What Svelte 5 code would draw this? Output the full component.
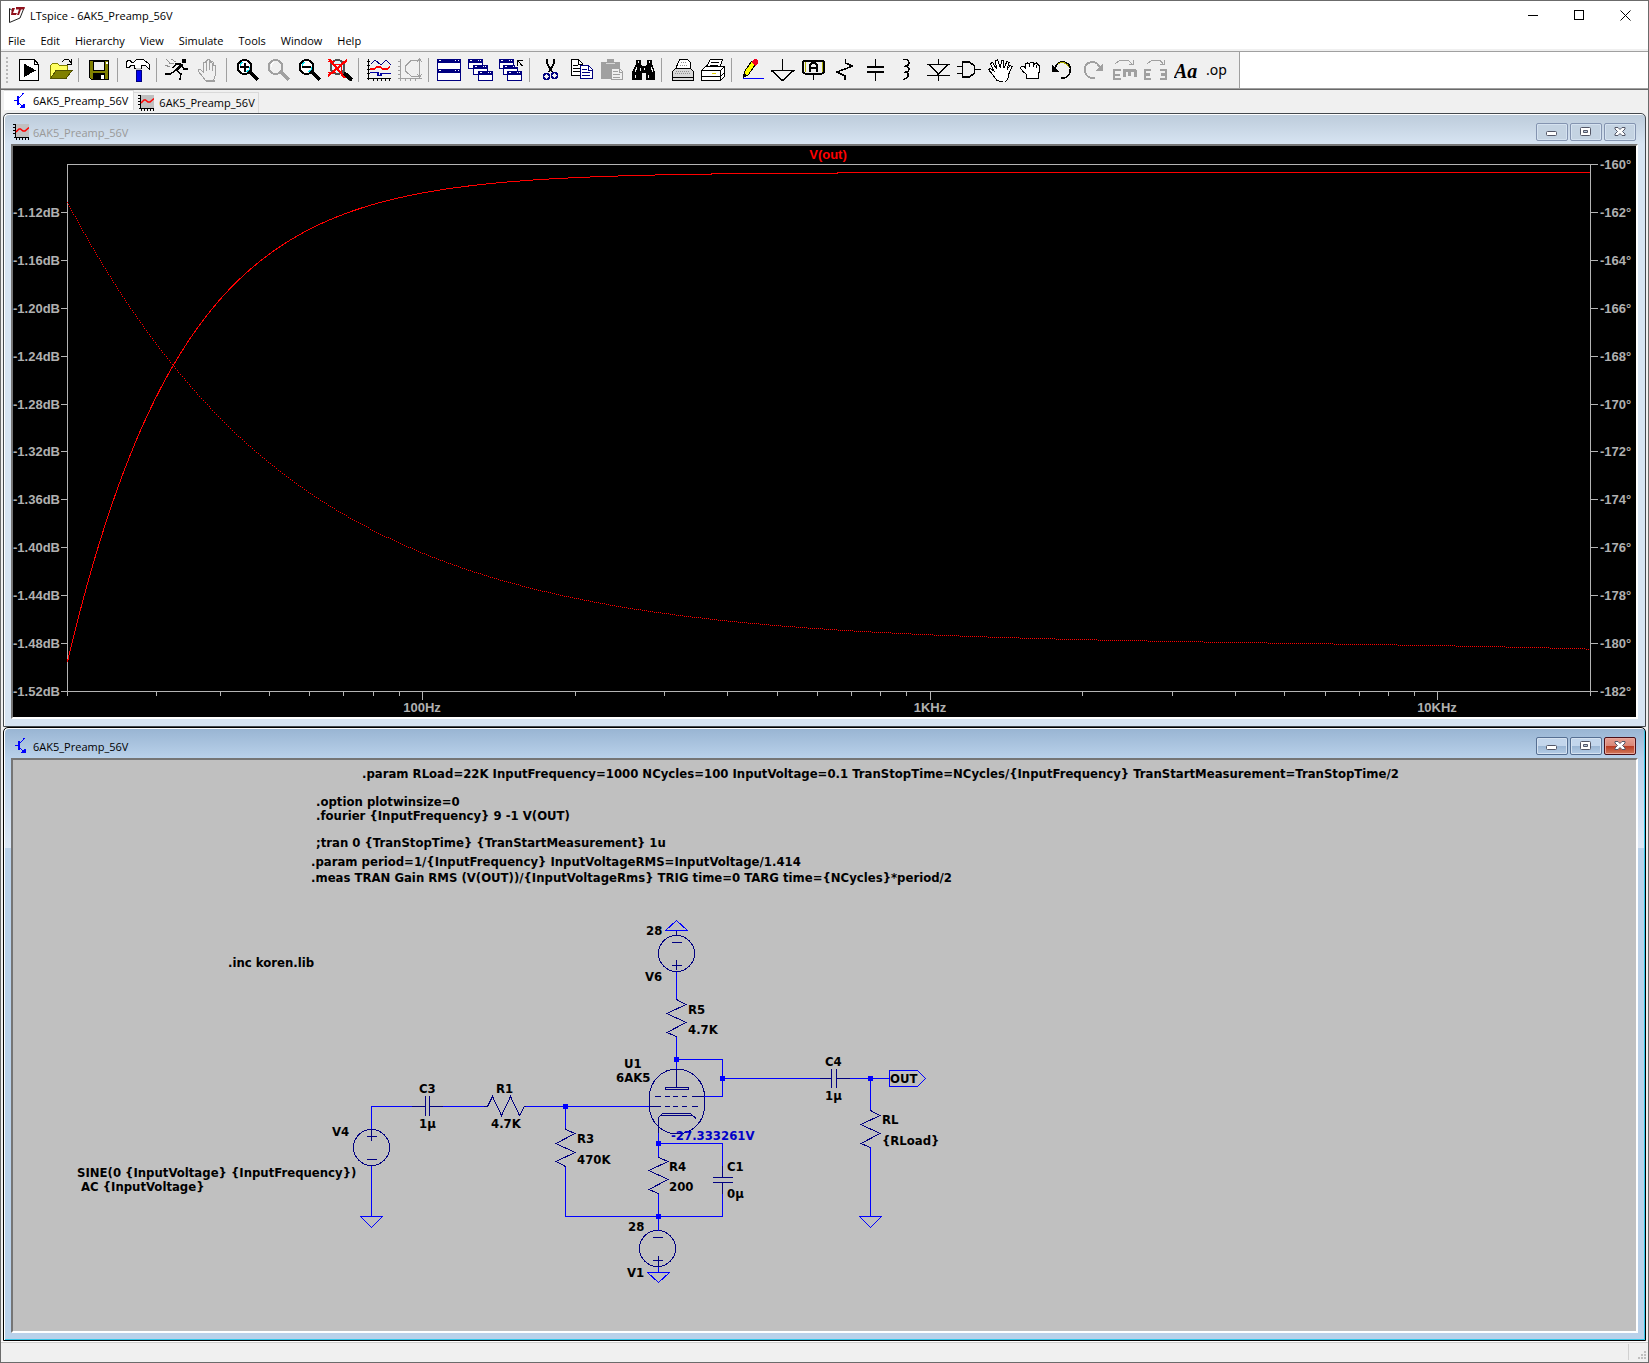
<script lang="ts">
  type Tool = { name: string; art: string; off?: boolean };

  const menus = ['File', 'Edit', 'Hierarchy', 'View', 'Simulate', 'Tools', 'Window', 'Help'];

  const lens = (c: string, glass: string) =>
    `<circle cx="9.5" cy="9" r="7" fill="${glass}" stroke="${c}" stroke-width="2"/><path d="M15 14L23 22" stroke="${c}" stroke-width="3.5"/>`;
  const glint = '<path d="M5 9V6L8 4M14 9v3l-3 2" stroke="#00e0f0"/>';
  const win = (x: number, y: number) =>
    `<path d="M${x}.5 ${y}.5h14v9h-14z" fill="#fff" stroke="#000080"/><path d="M${x} ${y + 2}h15" stroke="#000080" stroke-width="4"/><path d="M${x + 2} ${y + 1.5}h2M${x + 10} ${y + 1.5}h1M${x + 12} ${y + 1.5}h1" stroke="#fff"/>`;

  // toolbar groups, each drawn on a 25 x 24 grid
  const groups: Tool[][] = [
    [
      { name: 'Run', art: '<path d="M2.500 1.500h15l4 5v16h-19z" fill="#fff" stroke="#000"/><path d="M17.500 1.500v5h4" stroke="#000"/><path d="M7 5.500L19 12.500L7 19z" fill="#000"/>' },
      { name: 'Open', art: '<path d="M2.500 20V7.500l2-2h5l2 2h8V12" fill="#ffff60" stroke="#808000"/><path d="M2.500 20.500L8 12.500h16l-6 8z" fill="#808000" stroke="#505000"/><path d="M13.500 4.500l3-3h4l3 4M23.500 1v5h-5" stroke="#000"/>' },
    ],
    [{ name: 'Save', art: '<path d="M2.500 2.500h19v19h-17l-2-2z" fill="#808000" stroke="#000"/><path d="M6.500 3v9.500h11V3z" fill="#f0f0f0" stroke="#000"/><path d="M6 15h12v7H6z" fill="#000"/><path d="M14 17h3v4h-3z" fill="#fff"/><path d="M19 4h2v2h-2z" fill="#fff"/>' }],
    [{ name: 'Control Panel', art: '<path d="M10 12h5v11h-5z" fill="#0000f0" stroke="#000080"/><path d="M.500 9.500v-6l2-1h2l1 2h2l3-3h7l6 5v5l-4-4h-4v3H8v-3H5l-2 2z" fill="#fff" stroke="#000"/><path d="M10 10h5v2h-5z" fill="#c0c0c0"/>' }],
    [
      { name: 'Run Simulation', art: '<path d="M17 1h4v4h-4z" fill="#000"/><path d="M17 6L11 13" stroke="#000" stroke-width="3"/><path d="M15 6H11L8 10M17 8l2 3h4M11 12l5 4l-1 6M10 13l-5 3H0" stroke="#000" stroke-width="1.500"/><path d="M1 1l4 4M4 5l5 1M0 7l5 2M6 1l5 3" stroke="#909090"/>' },
      { name: 'Halt', off: true, art: '<path d="M9.500 22.500L4.500 16L2.500 13.500V12l2-.500L7.500 14V5l2-1l1 1V2.500l2-1l2 1v2l2-1l1 1v3l2 0v9l-2 6z" fill="#f0f0f0" stroke="#a0a0a0"/><path d="M10.500 4v9M13.500 3v9M16.500 5v8" stroke="#a0a0a0" stroke-width="1.500"/><path d="M10 22.500h9" stroke="#a0a0a0" stroke-width="2"/>' },
    ],
    [
      { name: 'Zoom In', art: lens('#000', '#fff') + glint + '<path d="M5 9h9M9.500 4.500v9" stroke="#000" stroke-width="2"/>' },
      { name: 'Pan', off: true, art: lens('#a0a0a0', '#f0f0f0') + '<path d="M5 9V6L8 4" stroke="#fff"/>' },
      { name: 'Zoom Out', art: lens('#000', '#fff') + glint + '<path d="M5 9h9" stroke="#000" stroke-width="2"/>' },
      { name: 'Zoom to Fit', art: lens('#505050', '#d8f8ff') + '<path d="M16 15L24 22" stroke="#000" stroke-width="4"/><path d="M1 1L17 20M19 2L0 18" stroke="#f00" stroke-width="2.200"/><path d="M0 3h7M4 6h10M0 14h8M13 5v10" stroke="#f00"/>' },
    ],
    [
      { name: 'Autorange', art: '<path d="M1.500 1v21M0 20.500h24M0 3.500h3M0 7.500h3M0 11.500h3M0 15.500h3M6.500 20v3M10.500 20v3M14.500 20v3M18.500 20v3M22.500 20v3" stroke="#000"/><path d="M4 6l4-4l6 5l5-5l5 5" stroke="#000080"/><path d="M3 11h4l3-2h3l3 2h4l3-2" stroke="#f00" stroke-width="1.500"/><path d="M3 14.500h8v3h3v-2h10" stroke="#0000a0" stroke-width="1.500"/>' },
      { name: 'Smith Chart', off: true, art: '<path d="M2.500 1v22M0 20.500h24M0 3.500h3M0 8.500h3M0 12.500h3M0 16.500h3M7.500 20v3M12.500 20v3M17.500 20v3M21.500 1v18M19 4l2.500-3L24 4M19 16l2.500 3l2.500-3M21 2.500H13L7.500 8v5l5.500 5h8" stroke="#a0a0a0"/>' },
    ],
    [
      { name: 'Tile', art: '<path d="M.500 1.500h23v21H.500z" fill="#fff" stroke="#000080"/><path d="M0 3h24M0 13h24" stroke="#000080" stroke-width="4"/><path d="M2 2.500h2M18 2.500h1M21 2.500h1M2 12.500h2M18 12.500h1M21 12.500h1" stroke="#fff"/>' },
      { name: 'Cascade', art: win(0, 1) + win(5, 7) + win(10, 13) },
      { name: 'Close All', art: win(0, 1) + win(4, 7) + win(8, 13) + '<path d="M16 0h9v9h-9z" fill="#f0f0f0"/><path d="M23.500 8L19 3M18.500 7.500V2.500H24" stroke="#000"/>' },
    ],
    [
      { name: 'Cut', art: '<path d="M9 1v4l5 9M16 1v4l-5 9" stroke="#000" stroke-width="1.800"/><circle cx="8.500" cy="18.500" r="3" stroke="#000080" stroke-width="1.500"/><circle cx="16.500" cy="17.500" r="3" stroke="#000080" stroke-width="1.500"/>' },
      { name: 'Copy', art: '<path d="M2.500 1.500h7l4 4v12h-11z" fill="#fff" stroke="#000"/><path d="M9.500 2v4h4M4 7.500h5M4 10.500h7M4 13.500h7" stroke="#000"/><path d="M11.500 7.500h8l4 4v9h-12z" fill="#fff" stroke="#000080"/><path d="M19.500 8v4h4M13 11.500h5M13 14.500h8M13 17.500h8" stroke="#000080"/>' },
      { name: 'Paste', off: true, art: '<path d="M1 4h6V1h7v3h6v17H1z" fill="#a0a0a0"/><path d="M6 5.500h9" stroke="#d8d8d8"/><path d="M11.500 10.500h8l3 3v8h-11z" fill="#f0f0f0" stroke="#a0a0a0"/><path d="M19.500 10v4h3M13 13.500h5M13 16.500h7M13 19.500h7" stroke="#a0a0a0"/>' },
      { name: 'Find', art: '<path d="M5 2h5v4l1 2h4l1-2V2h5v4l3 8v8h-9v-7h-4v7H1v-8l4-8z" fill="#000"/><path d="M7.500 3v2M18.500 3v2M6 9l-2 5M20 9l2 5M4.500 17v3M17.500 17v3M9 10v3M13 10v2" stroke="#f0f0f0"/>' },
    ],
    [
      { name: 'Print', art: '<path d="M5.500 11L9.500 1.500h8l3 3V11" fill="#fff" stroke="#000"/><path d="M2.500 13.500l3-3h15l3 3v9h-21z" fill="#d8d8d8" stroke="#000"/><path d="M3 19.500h20" stroke="#000"/><path d="M11 4.500h5M10 7.500h8M5 15.500h16M6 13.500h14" stroke="#909090" stroke-dasharray="1 1"/>' },
      { name: 'Print Setup', art: '<path d="M4.500 10L9.500 1.500h12l-3 9" fill="#fff" stroke="#000"/><path d="M10 4.500h8M9 7.500h8" stroke="#000"/><path d="M.500 12.500l4-4h18l1 2v8l-4 4H.500z" fill="#fff" stroke="#000"/><path d="M0 12.500h19M0 18.500h19M19.500 12v10M20 12l4-4M20 18l4-4" stroke="#000"/><path d="M11 15.500h4" stroke="#e0d000"/>' },
    ],
    [
      { name: 'Wire', art: '<path d="M3 20.500h21" stroke="#00f"/><path d="M3.500 19.500l1-6l7-10l4 3l-7 10z" fill="#ff0" stroke="#000"/><path d="M11 4l3-3h2l2 2v2l-3 3z" fill="#f00020"/><path d="M3 20l1-5l3 2z" fill="#000"/>' },
      { name: 'Ground', art: '<path d="M11.500 1v11M.500 12.500h22L11.500 22.500z" stroke="#000" stroke-width="1.500"/>' },
      { name: 'Label Net', art: '<rect x="1" y="2.500" width="21" height="13" rx="2" fill="#f0f0f0" stroke="#000" stroke-width="2"/><path d="M3.500 4v10M20.500 4v10" stroke="#b0b000"/><path d="M8 13.500V7l2-2.500h3L15 7v6.500M8 10h7" stroke="#000" stroke-width="2"/><path d="M11.500 16v6" stroke="#000"/>' },
      { name: 'Resistor', art: '<path d="M12.500 1v4l7 3L4 14l8 4v4" stroke="#000" stroke-width="1.500"/>' },
      { name: 'Capacitor', art: '<path d="M11.500 1v9M11.500 15v8" stroke="#000" stroke-width="1.500"/><path d="M3 9h17M3 14h17" stroke="#000" stroke-width="2"/>' },
      { name: 'Inductor', art: '<path d="M8 1.500h4q5 5-2 7h-1h3q5 4-2 6h-1h3q4 5-4 7" stroke="#000" stroke-width="1.500"/>' },
      { name: 'Diode', art: '<path d="M12.500 1v5M1 6.500h23M3.500 6.500l9 10l9-10M1 17.500h23M12.500 17v6" stroke="#000" stroke-width="1.500"/>' },
      { name: 'Component', art: '<path d="M5.500 4v15h7l5-4v-7l-5-4zM0 8.500h5M0 15.500h5M18 11.500h6" stroke="#000" stroke-width="1.500"/>' },
      { name: 'Move', art: '<path d="M9 22.500L5 17L.500 11.500l2-1L6 13L2.500 5.500l2-1L8.500 11L7.500 3l2-1.500L12.500 10l1-8l2 0l.500 8l3-6.500l2 1l-2 7l3-4l2 1l-3 7l-1 5l-3 4z" fill="#fff" stroke="#000"/>' },
      { name: 'Drag', art: '<path d="M7.500 20.500v-4L3.500 13l-2-3l1-2h2l2 2V6l2-1l2 1l1-2h2l2 2l2-1l2 2l1 1v4l-1 5v4z" fill="#fff" stroke="#000"/><path d="M10.500 6v3M14.500 6v3M17.500 7v3" stroke="#000"/>' },
      { name: 'Undo', art: '<path d="M5 10q3-7 9-6q8 2 6 10q-2 7-9 6" stroke="#000" stroke-width="1.500"/><path d="M8 6q6-4 11 3" stroke="#b0b000"/><path d="M2 7v7h8z" fill="#000"/>' },
      { name: 'Redo', off: true, art: '<path d="M19 10q-3-7-9-6q-8 2-6 10q2 7 10 6" stroke="#a0a0a0" stroke-width="1.800"/><path d="M22 5v8h-8z" fill="#a0a0a0"/>' },
      { name: 'Rotate', off: true, art: '<path d="M3 6l5-4h8l4 4M21 2v4.500h-4" stroke="#a0a0a0"/><path d="M9 12H2v9h7M2 16.500h6M2 11v11" stroke="#a0a0a0" stroke-width="2"/><path d="M11 12h13M12 12v7M17.500 12v6M23 12v7" stroke="#a0a0a0" stroke-width="3"/>' },
      { name: 'Mirror', off: true, art: '<path d="M4 6l5-4h8l3 4M21 2v4.500h-4" stroke="#a0a0a0"/><path d="M8 12H2M8 21H2M2 16.500h5M2 11v11M17 12h6M17 21h6M18 16.500h5M23 11v11" stroke="#a0a0a0" stroke-width="2.500"/>' },
      { name: 'Text', art: '<text x="0" y="20" font-family="Liberation Serif, serif" font-size="20" font-weight="700" font-style="italic" fill="#000">Aa</text>' },
      { name: 'SPICE Directive', art: '<text x="1" y="17" font-family="Noto Sans, sans-serif" font-size="14" fill="#000">.op</text>' },
    ],
  ];

  // bode plot
  const left = 54.5;
  const right = 1577.5;
  const top = 18.5;
  const bottom = 545.5;
  const step = (bottom - top) / 11;
  const decade = (right - left) / 3;
  const freqX = (f: number) => left + Math.log10(f / 20) * decade;
  const freqAt = (x: number) => 20 * 10 ** ((x - left) / decade);

  const gainTicks = Array.from({ length: 11 }, (_, i) => ({
    y: Math.floor(top + step * (i + 1)) + 0.5,
    text: `-${(1.12 + i * 0.04).toFixed(2)}dB`,
  }));
  const phaseTicks = Array.from({ length: 12 }, (_, i) => ({
    y: Math.floor(top + step * i) + 0.5,
    text: `-${160 + i * 2}°`,
  }));
  const majors = [
    { f: 100, text: '100Hz' },
    { f: 1000, text: '1KHz' },
    { f: 10000, text: '10KHz' },
  ];
  const minors = [10, 100, 1000, 10000]
    .flatMap((d) => [2, 3, 4, 5, 6, 7, 8, 9].map((m) => d * m))
    .filter((f) => f <= 20000);

  const deg = (rad: number) => (rad * 180) / Math.PI;
  const gain = (f: number) => -1.0867 - 10 * Math.log10(1 + (6.28 / f) ** 2);
  const phase = (f: number) =>
    -180 + deg(Math.atan(6.28 / f)) + deg(Math.atan(0.338 / f)) - f / 80000;
  const gainY = (x: number) => top + ((-1.08 - gain(freqAt(x))) / 0.04) * step;
  const phaseY = (x: number) => top + ((-160 - phase(freqAt(x))) / 2) * step;

  const gainTrace = Array.from({ length: 762 }, (_, i) => left + i * 2)
    .map((x) => `${x},${gainY(x).toFixed(2)}`)
    .join(' ');

  // phase is dotted: every second pixel along the steeper axis
  function dots() {
    let d = '';
    for (let x = left; x < right; ) {
      const y = phaseY(x);
      d += `M${Math.floor(x)} ${Math.floor(y) + 0.5}h1`;
      x += 2 / Math.max(1, Math.abs(phaseY(x + 1) - y));
    }
    return d;
  }
  const phaseDots = dots();

  // schematic, in sheet coordinates
  const wires = [
    'M676.5 972V999M676.5 1037V1069M676.5 1059.5H722.5V1096.5H704',
    'M722.5 1078.5H820M850 1078.5H889M870.5 1078.5V1110M870.5 1147V1216',
    'M371.5 1129V1106.5H412M443 1106.5H484M526 1106.5H649M565.5 1106.5V1128M565.5 1167V1216.5H722.5V1194',
    'M371.5 1166V1216M658.5 1133V1157M658.5 1143.5H722.5V1166M658.5 1194V1231M658.5 1267V1272',
    'M889.5 1070.500H917.500L925.500 1078.500L917.500 1086.500H889.5Z',
    'M676.5 920.500L687.500 930.500H665.500ZM658.5 1282.500L669.500 1272.500H647.500Z',
    'M870.5 1227.500L881.500 1216.500H859.500ZM371.5 1227.500L382.500 1216.500H360.500Z',
  ];
  const parts = [
    'M676.5 931V935M672 942.5h10M672 965.5h10M676.5 960v10M676.5 971v6',
    'M653 1237.5h10M653 1260.5h10M658.5 1256v16',
    'M371.5 1129v12M367 1136.5h10M367 1159.5h10M371.5 1165v5',
    'M676.5 996V999.500L686 1004.500L667 1013.500L686 1022.500L667 1032.500L676.5 1036.500V1041',
    'M658.5 1154V1157.500L668 1161.500L649 1170.500L668 1179.500L649 1189.500L658.5 1193.500V1198',
    'M870.5 1107V1110.500L880 1115.500L861 1124.500L880 1133.500L861 1143.500L870.5 1147.500V1152',
    'M565.5 1126V1129.500L575 1133.500L556 1143.500L575 1152.500L556 1161.500L565.5 1166.500V1170',
    'M483 1106.5H487.500L492.500 1096.500L501.500 1115.500L510.500 1096.500L519.500 1115.500L524.500 1106.5H528',
    'M409 1106.5H425.5M425.5 1096V1116M429.5 1096V1116M429.5 1106.5H446',
    'M816 1078.5H831.5M831.5 1069V1088M836.5 1069V1088M836.5 1078.5H852',
    'M722.5 1162V1177.5M713 1177.5H733M713 1182.5H733M722.5 1182.5V1198',
    'M649.5 1097A27.500 28 0 0 1 704.5 1097V1106A27.500 28 0 0 1 649.5 1106Z',
    'M676.5 1069V1087M665.5 1087.5H688.5V1089.5H665.5Z',
    'M655 1096.5h6M665 1096.5h5M673 1096.5h5M682 1096.5h5M692 1096.5h12',
    'M649 1106.5h12M665 1106.5h5M673 1106.5h5M682 1106.5h5M692 1106.5h6',
    'M658.5 1133V1117.500L662.5 1113.500H690.500L696 1118.500M660 1115.5H693',
  ];
  const circles = [
    [676.5, 953.5],
    [657.5, 1248.5],
    [371.5, 1147.5],
  ];
  const joints = [
    [676.5, 1059.5],
    [722.5, 1078.5],
    [870.5, 1078.5],
    [565.5, 1106.5],
    [658.5, 1143.5],
    [658.5, 1216.5],
  ];
  const notes: [number, number, string][] = [
    [362, 778, '.param RLoad=22K InputFrequency=1000 NCycles=100 InputVoltage=0.1 TranStopTime=NCycles/{InputFrequency} TranStartMeasurement=TranStopTime/2'],
    [316, 806, '.option plotwinsize=0'],
    [316, 820, '.fourier {InputFrequency} 9 -1 V(OUT)'],
    [316, 847, ';tran 0 {TranStopTime} {TranStartMeasurement} 1u'],
    [311, 866, '.param period=1/{InputFrequency} InputVoltageRMS=InputVoltage/1.414'],
    [311, 882, '.meas TRAN Gain RMS (V(OUT))/{InputVoltageRms} TRIG time=0 TARG time={NCycles}*period/2'],
    [228, 967, '.inc koren.lib'],
    [646, 935, '28'],
    [645, 981, 'V6'],
    [688, 1014, 'R5'],
    [688, 1034, '4.7K'],
    [624, 1068, 'U1'],
    [616, 1082, '6AK5'],
    [825, 1066, 'C4'],
    [825, 1100, '1µ'],
    [890, 1083, 'OUT'],
    [882, 1124, 'RL'],
    [882, 1145, '{RLoad}'],
    [419, 1093, 'C3'],
    [419, 1128, '1µ'],
    [496, 1093, 'R1'],
    [491, 1128, '4.7K'],
    [332, 1136, 'V4'],
    [77, 1177, 'SINE(0 {InputVoltage} {InputFrequency})'],
    [81, 1191, 'AC {InputVoltage}'],
    [577, 1143, 'R3'],
    [577, 1164, '470K'],
    [669, 1171, 'R4'],
    [669, 1191, '200'],
    [727, 1171, 'C1'],
    [727, 1198, '0µ'],
    [628, 1231, '28'],
    [627, 1277, 'V1'],
  ];
</script>

{#snippet chartIcon()}
  <svg class="doc-icon" viewBox="0 0 16 16" aria-hidden="true">
    <path d="M3 0h13v13H3z" fill="#c0c0c0" />
    <path d="M2.500 0v14M1 13.500h15M0 .5h2M0 3.500h2M0 6.500h2M0 9.500h2M3.500 14v2M6.500 14v2M9.500 14v2M12.500 14v2M15.500 14v2" stroke="#000" />
    <path class="curve" d="M3 8L6 5h1.500L10 7h2l4-3.500" stroke="#f00" stroke-width="1.500" />
  </svg>
{/snippet}

{#snippet transistorIcon()}
  <svg class="doc-icon" viewBox="0 0 16 16" aria-hidden="true">
    <path d="M2 7.500h4M6 6.500L11.500 0M6 9l4 4" stroke="#00f" />
    <path d="M6 3v9" stroke="#00f" stroke-width="2" />
    <path d="M12.500 15.500v-5l-5 4z" fill="#00f" />
  </svg>
{/snippet}

{#snippet childBar(active: boolean)}
  <header class="child-bar">
    {#if active}{@render transistorIcon()}{:else}{@render chartIcon()}{/if}
    <h2>6AK5_Preamp_56V</h2>
    <button class="frame-btn" aria-label="Minimize">
      <svg viewBox="0 0 14 10"><rect x="1.500" y="4.500" width="10" height="4" rx="1" fill="#fff" stroke="#535666" /></svg>
    </button>
    <button class="frame-btn" aria-label="Maximize">
      <svg viewBox="0 0 14 10"><rect x="1.500" y=".5" width="10" height="8" rx="1" fill="#fff" stroke="#535666" /><path d="M4.500 3.500h4v2h-4z" stroke="#535666" fill="#b8c8dc" /></svg>
    </button>
    <button class="frame-btn close" aria-label="Close">
      <svg viewBox="0 0 14 10"><path d="M2 .5h3l2 2l2-2h3v1.500L9.500 4.500L12 7v1.500H9l-2-2l-2 2H2V7l2.500-2.500L2 2z" fill="#fff" stroke="#535666" /></svg>
    </button>
  </header>
{/snippet}

<div class="app">
  <header class="title-bar">
    <svg class="logo" viewBox="0 0 17 17" aria-hidden="true">
      <path d="M.5 1.500L16 0L11 12L.5 15.500z" fill="#fff" />
      <path d="M.5 15.500V1.500L4 4M.5 15.500L11 11L15 1" stroke="#222" />
      <path d="M3 1h3L4 6h4L7 8H2zM7 0h9l-1 2.500h-3L10 8H8l2-5.500H7z" fill="#90101c" />
    </svg>
    <h1>LTspice - 6AK5_Preamp_56V</h1>
    <button class="caption" aria-label="Minimize"><svg viewBox="0 0 11 11"><path d="M0 5.500h10" stroke="#000" /></svg></button>
    <button class="caption" aria-label="Maximize"><svg viewBox="0 0 11 11"><path d="M.5.5h9v9h-9z" stroke="#000" /></svg></button>
    <button class="caption smooth" aria-label="Close"><svg viewBox="0 0 11 11"><path d="M.5.5l10 10M10.500.5l-10 10" stroke="#000" /></svg></button>
  </header>

  <nav class="menu-bar">
    {#each menus as menu}
      <button>{menu}</button>
    {/each}
  </nav>

  <div class="tool-row">
    <div class="toolbar" role="toolbar" aria-label="Main toolbar">
      {#each groups as group, i}
        {#if i > 0}<span class="sep"></span>{/if}
        {#each group as tool}
          <button class="tool" aria-label={tool.name} disabled={tool.off}>
            <svg viewBox="0 0 25 24">{@html tool.art}</svg>
          </button>
        {/each}
      {/each}
    </div>
  </div>

  <nav class="tabs">
    <button class="tab current">{@render transistorIcon()}6AK5_Preamp_56V</button>
    <button class="tab">{@render chartIcon()}6AK5_Preamp_56V</button>
  </nav>

  <main class="workspace">
    <section class="child">
      {@render childBar(false)}
      <div class="client plot">
        <svg viewBox="0 0 1623 571" role="img" aria-label="V(out) gain and phase">
          <text x="815" y="13" text-anchor="middle" class="trace-name">V(out)</text>
          <rect x={left} y={top} width={right - left} height={bottom - top} class="axis" />
          {#each gainTicks as tick}
            <path d="M{left - 7} {tick.y}H{left}" class="axis" />
            <text x="47" y={tick.y + 4.5} text-anchor="end">{tick.text}</text>
          {/each}
          {#each phaseTicks as tick}
            <path d="M{right} {tick.y}h7" class="axis" />
            <text x="1587" y={tick.y + 4.5}>{tick.text}</text>
          {/each}
          {#each minors as f}
            <path d="M{Math.floor(freqX(f)) + 0.5} {bottom}v4" class="axis" />
          {/each}
          {#each majors as m}
            <path d="M{Math.floor(freqX(m.f)) + 0.5} {bottom}v8" class="axis" />
            <text x={Math.floor(freqX(m.f))} y="566" text-anchor="middle">{m.text}</text>
          {/each}
          <polyline points={gainTrace} class="trace" />
          <path d={phaseDots} class="trace" />
        </svg>
      </div>
    </section>

    <section class="child active">
      {@render childBar(true)}
      <div class="client sheet">
        <svg viewBox="13 760 1623 571" role="img" aria-label="Preamp schematic">
          <path d={parts.join('')} class="part" />
          {#each circles as [cx, cy]}
            <circle {cx} {cy} r="18" class="part" />
          {/each}
          <path d={wires.join('')} class="wire" />
          {#each joints as [x, y]}
            <rect x={x - 2.5} y={y - 2.5} width="5" height="5" class="joint" />
          {/each}
          {#each notes as [x, y, text]}
            <text {x} {y}>{text}</text>
          {/each}
          <text x="671" y="1140" class="probe">-27.333261V</text>
        </svg>
      </div>
    </section>
  </main>

  <footer class="status">
    <svg viewBox="0 0 9 9" aria-hidden="true">
      <path d="M6 0h2v2H6zM3 3h2v2H3zM6 3h2v2H6zM0 6h2v2H0zM3 6h2v2H3zM6 6h2v2H6z" fill="#bfbfbf" />
    </svg>
  </footer>
</div>

<style>
  :global(body) {
    margin: 0;
    background: #f0f0f0;
  }

  .app {
    display: flex;
    flex-direction: column;
    box-sizing: border-box;
    min-height: 100vh;
    border: 1px solid #6b6b6b;
    background: #f0f0f0;
    color: #000;
    font: 11px/16px 'Open Sans', 'Noto Sans', sans-serif;
  }

  button {
    display: flex;
    align-items: center;
    justify-content: center;
    margin: 0;
    padding: 0;
    border: 0;
    background: none;
    color: inherit;
    font: inherit;
  }

  svg {
    display: block;
    fill: none;
    shape-rendering: crispEdges;
  }

  h1,
  h2 {
    flex: 1;
    margin: 0;
    font-size: 11px;
    font-weight: 400;
  }

  .title-bar {
    display: flex;
    align-items: center;
    height: 29px;
    padding-left: 8px;
    background: #fff;
  }

  .logo {
    width: 17px;
    height: 17px;
    margin-right: 4px;
    shape-rendering: auto;
  }

  .caption {
    width: 46px;
    height: 29px;
  }

  .caption svg {
    width: 11px;
    height: 11px;
  }

  .smooth svg,
  .curve {
    shape-rendering: auto;
  }

  .menu-bar {
    display: flex;
    gap: 1px;
    height: 17px;
    padding-top: 2px;
    border-bottom: 2px solid #f0f0f0;
    background: #fff;
  }

  .menu-bar button {
    padding: 0 7px;
  }

  .tool-row {
    height: 36px;
    border-top: 1px solid #a0a0a0;
    border-bottom: 1px solid #696969;
    box-shadow: inset 0 -1px #a0a0a0;
    padding-bottom: 1px;
    background: #fff;
  }

  .toolbar {
    display: flex;
    align-items: center;
    box-sizing: border-box;
    width: max-content;
    height: 36px;
    padding: 0 6px 0 5px;
    border-right: 1px solid #a0a0a0;
    background: #f0f0f0;
  }

  .toolbar::before {
    content: '';
    width: 2px;
    height: 27px;
    margin-right: 6px;
    background: repeating-linear-gradient(#b8b8b8 0 2px, transparent 2px 4px);
  }

  .tool {
    width: 31px;
    height: 30px;
  }

  .tool svg {
    width: 25px;
    height: 24px;
  }

  .sep {
    width: 1px;
    height: 24px;
    margin: 0 5px 0 2px;
    background: #a0a0a0;
  }

  .tabs {
    display: flex;
    align-items: flex-start;
    height: 23px;
    padding-left: 3px;
  }

  .tab {
    gap: 5px;
    height: 21px;
    margin-top: 2px;
    padding: 0 3px 0 4px;
    border: 1px solid #d9d9d9;
    border-width: 1px 1px 0 0;
  }

  .tab.current {
    height: 20px;
    margin-top: 0;
    padding: 0 5px 0 8px;
    background: #fff;
  }

  .doc-icon {
    flex: none;
    width: 16px;
    height: 16px;
  }

  .workspace {
    flex: 1;
    padding: 0 2px;
  }

  .child {
    padding: 1px 7px 7px;
    border: 1px solid #43484d;
    border-radius: 5px 5px 0 0;
    box-shadow: inset 1px 1px #fff;
    background: linear-gradient(#bccbda, #d7e4f2 30px);
  }

  .child.active {
    border-color: #000;
    box-shadow: inset 1px 1px #fff, inset -1px -1px #35c5e8;
    background: linear-gradient(#98b4d2, #b9d1ea 30px, #dce7f5 120px, #b9d1ea 120px);
  }

  .child-bar {
    display: flex;
    align-items: center;
    gap: 2px;
    height: 29px;
    padding: 4px 2px 0;
    box-sizing: border-box;
    color: #999;
  }

  .active .child-bar {
    color: #000;
  }

  .child-bar h2 {
    padding: 2px 0 0 2px;
  }

  .frame-btn {
    box-sizing: border-box;
    width: 32px;
    height: 18px;
    border: 1px solid #8494b0;
    border-radius: 2px;
    box-shadow: inset 0 0 0 1px #d5e2f0;
    background: #c4d3e2;
  }

  .frame-btn svg {
    width: 14px;
    height: 10px;
    shape-rendering: auto;
  }

  .active .frame-btn {
    border-color: #566f92;
    background: linear-gradient(#c3d6ec 50%, #9ab5d3 50%, #b5cde6);
  }

  .active .frame-btn.close {
    border-color: #4b1018;
    box-shadow: inset 0 0 0 1px #e8a79c;
    background: linear-gradient(#e6a093, #d98676 50%, #b83820 50%, #d07a5c);
  }

  .client {
    border: 2px solid;
    border-color: #757575 #fff #fff #757575;
  }

  .client svg {
    width: 100%;
    height: auto;
  }

  .plot {
    background: #000;
    font: 700 13px 'Liberation Sans', Arial, sans-serif;
  }

  .plot text {
    fill: #b0b0b0;
  }

  .plot .trace-name {
    fill: #f00;
  }

  .axis {
    stroke: #b4b4b4;
  }

  .trace {
    stroke: #f00;
  }

  .sheet {
    background: #c0c0c0;
    font: 700 13px 'DejaVu Sans Condensed', 'DejaVu Sans', Tahoma, sans-serif;
  }

  .sheet text {
    fill: #000;
  }

  .sheet .probe {
    fill: #0000c8;
  }

  .wire {
    stroke: #00f;
  }

  .part {
    stroke: #000080;
  }

  .joint {
    fill: #00f;
  }

  .status {
    display: flex;
    align-items: flex-end;
    justify-content: flex-end;
    box-sizing: border-box;
    height: 21px;
    padding: 0 1px 2px;
    border-top: 1px solid #fff;
    box-shadow: inset 0 1px #d0d0d0;
  }

  .status::before {
    content: '';
    width: 1px;
    height: 16px;
    margin-right: 9px;
    background: #d0d0d0;
  }

  .status svg {
    width: 9px;
    height: 9px;
  }
</style>
